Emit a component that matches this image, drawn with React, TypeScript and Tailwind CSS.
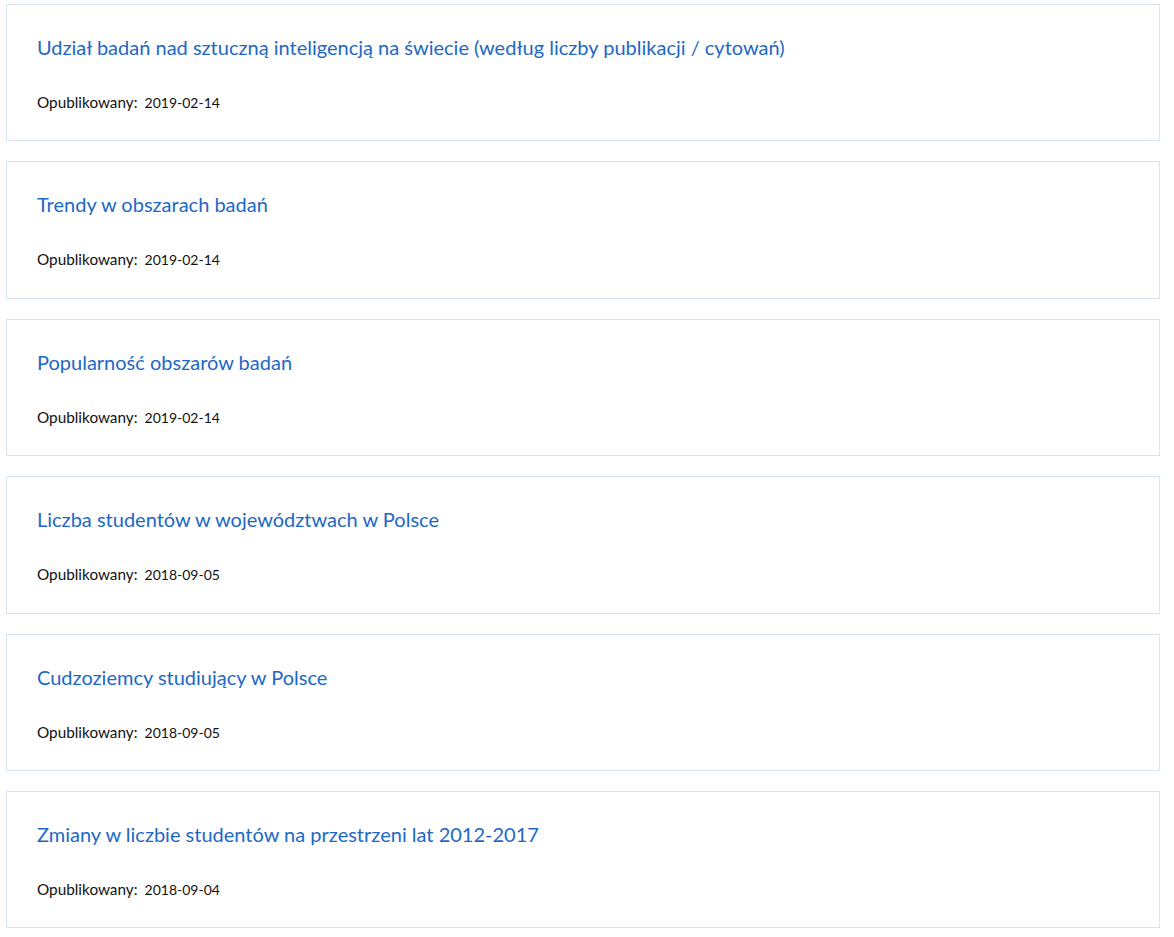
import React from "react";

const items = [
  { title: "Udział badań nad sztuczną inteligencją na świecie (według liczby publikacji / cytowań)", date: "2019-02-14" },
  { title: "Trendy w obszarach badań", date: "2019-02-14" },
  { title: "Popularność obszarów badań", date: "2019-02-14" },
  { title: "Liczba studentów w województwach w Polsce", date: "2018-09-05" },
  { title: "Cudzoziemcy studiujący w Polsce", date: "2018-09-05" },
  { title: "Zmiany w liczbie studentów na przestrzeni lat 2012-2017", date: "2018-09-04" },
];

export default function App() {
  return (
    <div className="min-h-[937px] bg-white pt-[4px] pl-[6px]" style={{ fontFamily: "Lato, 'Liberation Sans', sans-serif" }}>
      <div className="flex w-[1154px] flex-col gap-[20px]">
        {items.map((it) => (
          <div key={it.title} className="h-[137.4px] border border-[#d6e4f3] bg-white pl-[30px] pt-[28px]">
            <a href="#" className="block text-[20px] leading-[28px] text-[#1d68c6]">{it.title}</a>
            <div className="mt-[31px] text-[15.3px] leading-[20px] text-[#111]">
              <span>Opublikowany:</span>
              <span className="ml-[7px] text-[14px]">{it.date}</span>
            </div>
          </div>
        ))}
      </div>
    </div>
  );
}
